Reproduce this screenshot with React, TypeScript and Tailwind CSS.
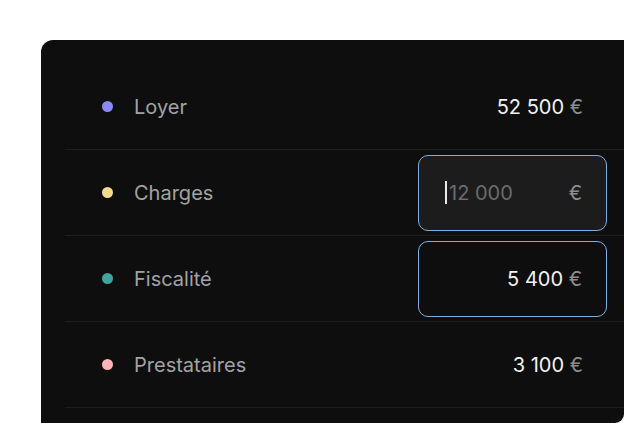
import { useState } from "react";

/* ───────────────────────────────────── */

interface Line {
  label: string;
  dot: string;
  amount: string;
  mode: "text" | "editing" | "focused";
}

const lines: Line[] = [
  { label: "Loyer", dot: "bg-[#8c87fa]", amount: "52 500", mode: "text" },
  { label: "Charges", dot: "bg-[#f6da8c]", amount: "12 000", mode: "editing" },
  { label: "Fiscalité", dot: "bg-[#3ca69d]", amount: "5 400", mode: "focused" },
  { label: "Prestataires", dot: "bg-[#ffb5b5]", amount: "3 100", mode: "text" },
];

/* ───────────────────────────────────── */

function Amount({ line }: { line: Line }) {
  const [draft, setDraft] = useState("");

  if (line.mode === "editing") {
    return (
      <label className="flex h-[76px] w-[189px] items-center rounded-[10px] border border-[#7eb0e6] bg-[#1c1c1c] pl-[26px] pr-[24px]">
        <span className="h-[23px] w-[2px] bg-[#e8e8e8]" />
        <input
          value={draft}
          onChange={(e) => setDraft(e.target.value)}
          placeholder={line.amount}
          className="ml-[2px] w-0 flex-1 bg-transparent text-[20px] text-white outline-none placeholder:text-[#6b6b6b]"
        />
        <span className="text-[20px] text-[#8e8e8e]">€</span>
      </label>
    );
  }

  return (
    <div
      className={
        line.mode === "focused"
          ? "flex h-[76px] w-[189px] items-center justify-end rounded-[10px] border border-[#7eb0e6] pr-[24px]"
          : "flex h-[76px] w-[189px] items-center justify-end pr-[24px]"
      }
    >
      <span className="text-[20px] text-[#f2f2f2]">
        {line.amount} <span className="text-[#8e8e8e]">€</span>
      </span>
    </div>
  );
}

export default function App() {
  return (
    <div
      className="h-[423px] w-[624px] overflow-hidden rounded-br-[9px] bg-white"
      style={{ fontFamily: "Inter, 'Noto Sans', sans-serif" }}
    >
      <div className="ml-[41px] mt-[40px] w-[590px] rounded-tl-[12px] bg-[#0e0e0e] pb-[40px] pl-[24px] pt-[24px]">
        {lines.map((line) => (
          <div
            key={line.label}
            className="flex h-[86px] items-center justify-between border-b border-[#1e1e1e] pl-[37px] pr-[24px]"
          >
            <div className="flex items-center gap-[21px]">
              <span className={`h-[11px] w-[11px] rounded-full ${line.dot}`} />
              <span className="text-[20px] text-[#a3a3a3]">{line.label}</span>
            </div>
            <Amount line={line} />
          </div>
        ))}
      </div>
    </div>
  );
}
